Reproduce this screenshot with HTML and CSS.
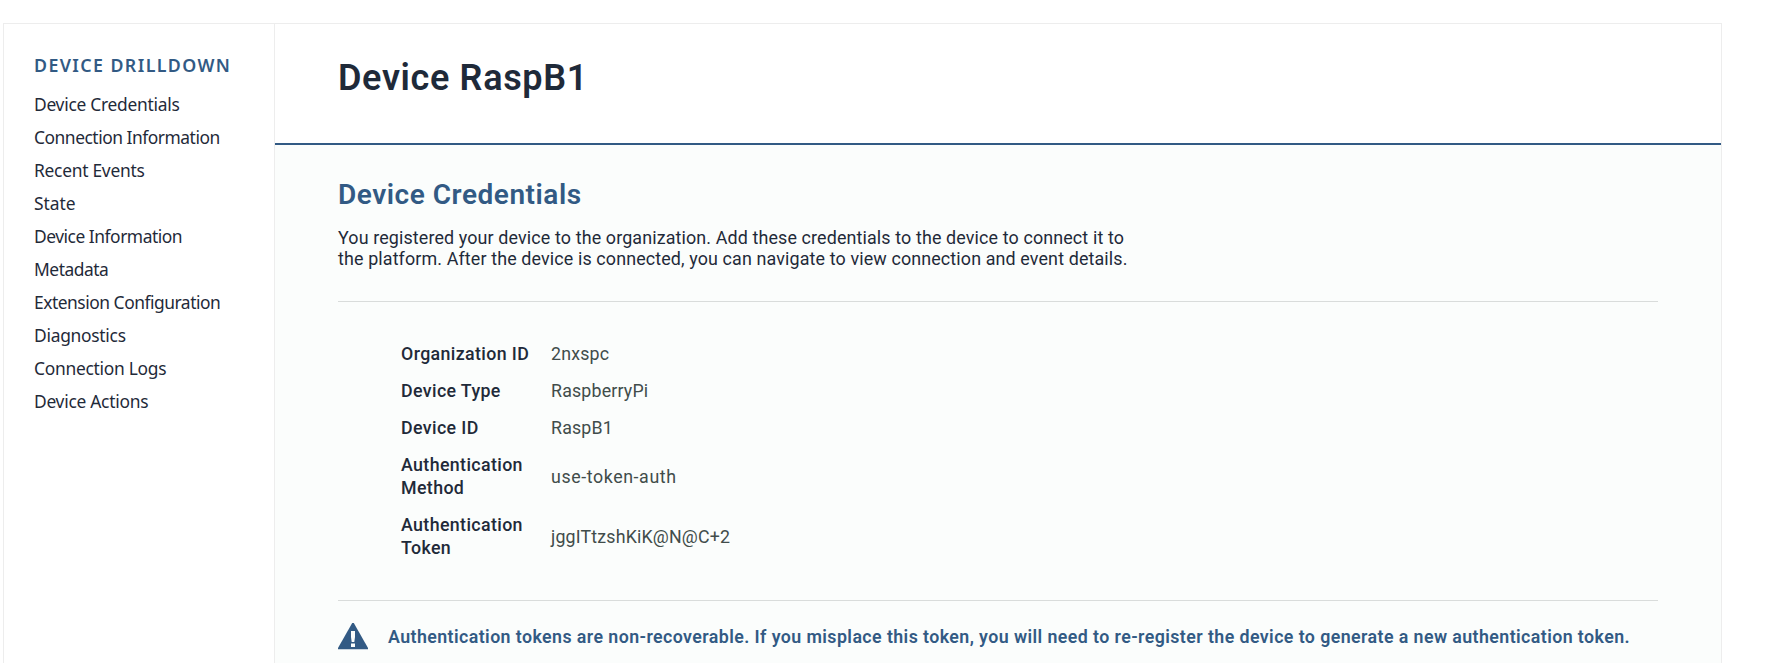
FILE: index.html
```
<!DOCTYPE html>
<html lang="en">
<head>
<meta charset="utf-8">
<title>Device RaspB1</title>
<link rel="stylesheet" href="styles.css">
</head>
<body>
<div class="panel">
  <nav class="sidebar">
    <h2 class="sidebar-title">DEVICE DRILLDOWN</h2>
    <ul class="menu">
      <li class="menu-item">Device Credentials</li>
      <li class="menu-item tight">Connection Information</li>
      <li class="menu-item">Recent Events</li>
      <li class="menu-item loose">State</li>
      <li class="menu-item tight">Device Information</li>
      <li class="menu-item tight">Metadata</li>
      <li class="menu-item tight">Extension Configuration</li>
      <li class="menu-item">Diagnostics</li>
      <li class="menu-item">Connection Logs</li>
      <li class="menu-item">Device Actions</li>
    </ul>
  </nav>
  <main class="main">
    <header class="header"><h1 class="title">Device RaspB1</h1></header>
    <section class="content">
      <h2 class="section-title">Device Credentials</h2>
      <p class="intro">You registered your device to the organization. Add these credentials to the device to connect it to<br>the platform. After the device is connected, you can navigate to view connection and event details.</p>
      <dl class="fields">
        <div class="field"><dt class="label">Organization ID</dt><dd class="value">2nxspc</dd></div>
        <div class="field"><dt class="label">Device Type</dt><dd class="value">RaspberryPi</dd></div>
        <div class="field"><dt class="label">Device ID</dt><dd class="value">RaspB1</dd></div>
        <div class="field"><dt class="label">Authentication<br>Method</dt><dd class="value wide">use-token-auth</dd></div>
        <div class="field"><dt class="label">Authentication<br>Token</dt><dd class="value">jggITtzshKiK@N@C+2</dd></div>
      </dl>
      <div class="notice">
        <svg class="notice-icon" viewBox="0 0 30 27" aria-hidden="true">
          <path d="M14.2 0 H15.8 L30 25 V26.3 H0 V25 Z" fill="#325a84"/>
          <path d="M13 8 H17 V14 L16.3 19 H13.7 L13 14 Z M13 20.5 H17 V24 H13 Z" fill="#fbfdfc"/>
        </svg>
        <p class="notice-text">Authentication tokens are non-recoverable. If you misplace this token, you will need to re-register the device to generate a new authentication token.</p>
      </div>
    </section>
  </main>
</div>
</body>
</html>
```
FILE: styles.css
```
* { box-sizing: border-box; margin: 0; padding: 0; }
body { height: 663px; overflow: hidden; background: #fff; font-family: Roboto, "Liberation Sans", sans-serif; color: #1f2a39; }
.panel { display: flex; width: 1719px; height: 640px; margin: 23px 0 0 3px; border: 1px solid #ededed; border-bottom: 0; }
.sidebar { width: 271px; flex: none; padding: 28px 0 0 30px; border-right: 1px solid #ededed; font-family: "Noto Sans", sans-serif; }
.sidebar-title { font-size: 17.8px; line-height: 26px; font-weight: 600; letter-spacing: 1.4px; color: #325a84; margin-bottom: 10px; white-space: nowrap; }
.menu { list-style: none; }
.menu-item { height: 33px; line-height: 33px; font-size: 17.4px; letter-spacing: -0.27px; white-space: nowrap; }
.menu-item.tight { letter-spacing: -0.47px; }
.menu-item.loose { letter-spacing: 0; }
.main { flex: 1; display: flex; flex-direction: column; min-width: 0; }
.header { height: 121px; padding: 33px 63px 0; border-bottom: 2px solid #325a84; }
.title { font-size: 36px; line-height: 42px; font-weight: 600; letter-spacing: 0.65px; }
.content { flex: 1; padding: 33px 63px 0; background: #fbfdfc; }
.section-title { font-size: 28px; line-height: 34px; font-weight: 600; letter-spacing: 0.53px; color: #325a84; }
.intro { margin-top: 15px; font-size: 17.9px; line-height: 21px; letter-spacing: 0.125px; white-space: nowrap; }
.fields { margin-top: 32px; padding: 33px 0 34px 63px; border-top: 1px solid #d9dcdb; border-bottom: 1px solid #d9dcdb; }
.field { display: flex; align-items: center; padding: 7px 0; font-size: 17.8px; line-height: 23px; }
.label { width: 150px; font-weight: 500; letter-spacing: 0.38px; }
.value { color: #414c4a; letter-spacing: 0.18px; }
.value.wide { letter-spacing: 0.6px; }
.notice { display: flex; align-items: flex-start; gap: 20px; padding-top: 22px; }
.notice-icon { width: 30px; height: 27px; flex: none; }
.notice-text { font-size: 17.8px; line-height: 28px; font-weight: 600; color: #325a84; white-space: nowrap; letter-spacing: 0.42px; }
```
